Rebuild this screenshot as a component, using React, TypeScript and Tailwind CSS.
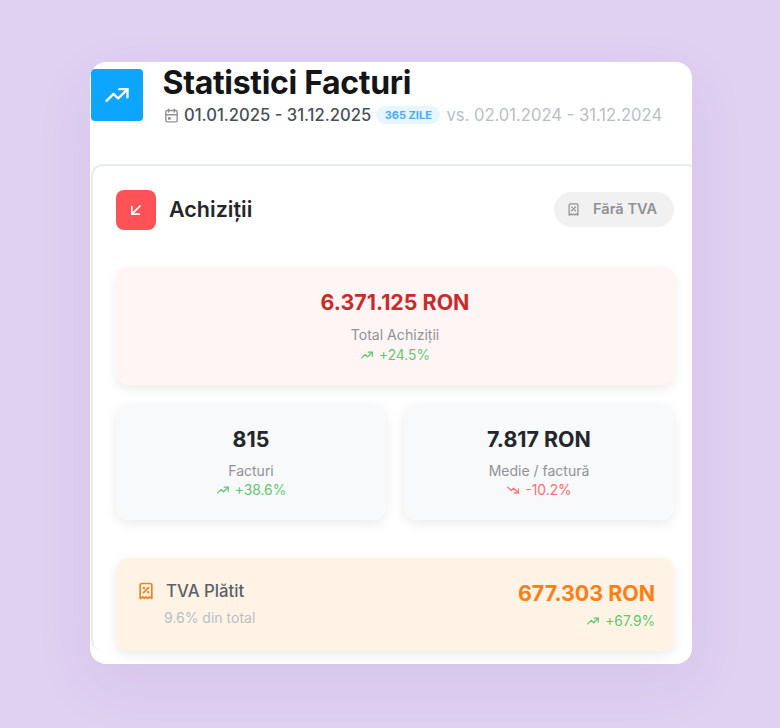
import React from "react";
import { TbTrendingUp, TbTrendingDown, TbArrowDownLeft, TbCalendarEvent, TbReceiptTax } from "react-icons/tb";

function Delta({ v, up = true, className = "" }: { v: string; up?: boolean; className?: string }) {
  return (
    <div className={`flex items-center justify-center gap-[5px] text-[13.8px] leading-[20px] ${up ? "text-[#5cc76f]" : "text-[#ff6b6b]"} ${className}`}>
      {up ? <TbTrendingUp size={14} strokeWidth={2.2} /> : <TbTrendingDown size={14} strokeWidth={2.2} />}
      <span>{v}</span>
    </div>
  );
}

function Small({ value, label, delta, up = true }: { value: string; label: string; delta: string; up?: boolean }) {
  return (
    <div className="flex h-[116px] flex-col items-center rounded-xl bg-[#f8f9fb] pt-[21px] shadow-[0_4px_12px_rgba(0,0,0,0.08)]">
      <div className="text-[21.4px] font-bold leading-[28px] text-[#25262b]">{value}</div>
      <div className="mt-[8px] text-[14px] leading-[20px] text-[#909296]">{label}</div>
      <Delta v={delta} up={up} className="-mt-[1px]" />
    </div>
  );
}

export default function App() {
  return (
    <div className="h-[728px] w-[780px] overflow-hidden bg-[#e0d0f2] pl-[90px] pt-[62px] font-['Inter',sans-serif]">
      <div className="h-[602px] w-[602px] overflow-hidden rounded-[16px] bg-white shadow-[0_20px_60px_rgba(80,60,120,0.08)]">
        <div className="flex h-[102px] items-start">
          <div className="ml-[1px] mt-[7px] flex h-[52px] w-[52px] shrink-0 items-center justify-center rounded-[4px] bg-[#0ea5ff] text-white">
            <TbTrendingUp size={28} />
          </div>
          <div className="ml-[19.5px] min-w-0 whitespace-nowrap">
            <div className="mt-[3px] text-[32px] font-bold leading-[36px] tracking-[-0.32px] text-[#141517]">Statistici Facturi</div>
            <div className="mt-[2px] flex items-center">
              <TbCalendarEvent size={17} className="text-[#909296]" />
              <span className="ml-[4.5px] text-[16.6px] font-medium leading-[24px] text-[#495057]">01.01.2025 - 31.12.2025</span>
              <span className="ml-[5px] flex h-[18px] items-center rounded-full bg-[#e7f5ff] px-[8.5px] text-[11px] font-bold text-[#4dabf7]">365 ZILE</span>
              <span className="ml-[6px] text-[16.6px] leading-[24px] text-[#b9bec4]">vs. 02.01.2024 - 31.12.2024</span>
            </div>
          </div>
        </div>
        <div className="ml-[1px] w-[608px] rounded-xl border-2 border-b-0 border-r-0 border-[#e9ecef] pl-[23px] pr-[25px] pt-[24px]">
          <div className="flex items-center justify-between">
            <div className="flex items-center gap-[13px]">
              <div className="flex h-[40px] w-[40px] items-center justify-center rounded-[8px] bg-[#ff5257] text-white">
                <TbArrowDownLeft size={20} />
              </div>
              <div className="pb-[2px] text-[21.5px] font-semibold leading-[28px] text-[#25262b]">Achiziții</div>
            </div>
            <div className="mb-[1px] flex h-[35px] w-[120px] items-center rounded-full bg-[#f1f1f2] pl-[12px] text-[14.6px] font-semibold text-[#909296]">
              <TbReceiptTax size={15} />
              <span className="ml-[12px]">Fără TVA</span>
            </div>
          </div>
          <div className="mt-[37px] flex h-[118px] flex-col items-center rounded-xl bg-[#fff5f5] pt-[21px] shadow-[0_4px_12px_rgba(0,0,0,0.08)]">
            <div className="text-[21.4px] font-bold leading-[28px] text-[#c92a2a]">6.371.125 RON</div>
            <div className="mt-[9px] text-[14.1px] leading-[20px] text-[#909296]">Total Achiziții</div>
            <Delta v="+24.5%" />
          </div>
          <div className="mt-[19px] grid grid-cols-2 gap-[18px]">
            <Small value="815" label="Facturi" delta="+38.6%" />
            <Small value="7.817 RON" label="Medie / factură" delta="-10.2%" up={false} />
          </div>
          <div className="mt-[38px] flex h-[93px] items-start justify-between rounded-xl bg-[#fff3e6] pl-[20px] pr-[19px] pt-[21px] shadow-[0_4px_12px_rgba(0,0,0,0.08)]">
            <div>
              <div className="flex items-center gap-[10px]">
                <TbReceiptTax size={20} className="text-[#fd7e14]" />
                <span className="text-[16.8px] font-medium leading-[24px] text-[#5c5f66]">TVA Plătit</span>
              </div>
              <div className="ml-[28px] mt-[5px] text-[14px] leading-[20px] text-[#b9bec4]">9.6% din total</div>
            </div>
            <div className="flex flex-col items-end">
              <div className="text-[21.4px] font-bold leading-[28px] text-[#fd7e14]">677.303 RON</div>
              <Delta v="+67.9%" className="mt-[4px]" />
            </div>
          </div>
        </div>
      </div>
    </div>
  );
}
